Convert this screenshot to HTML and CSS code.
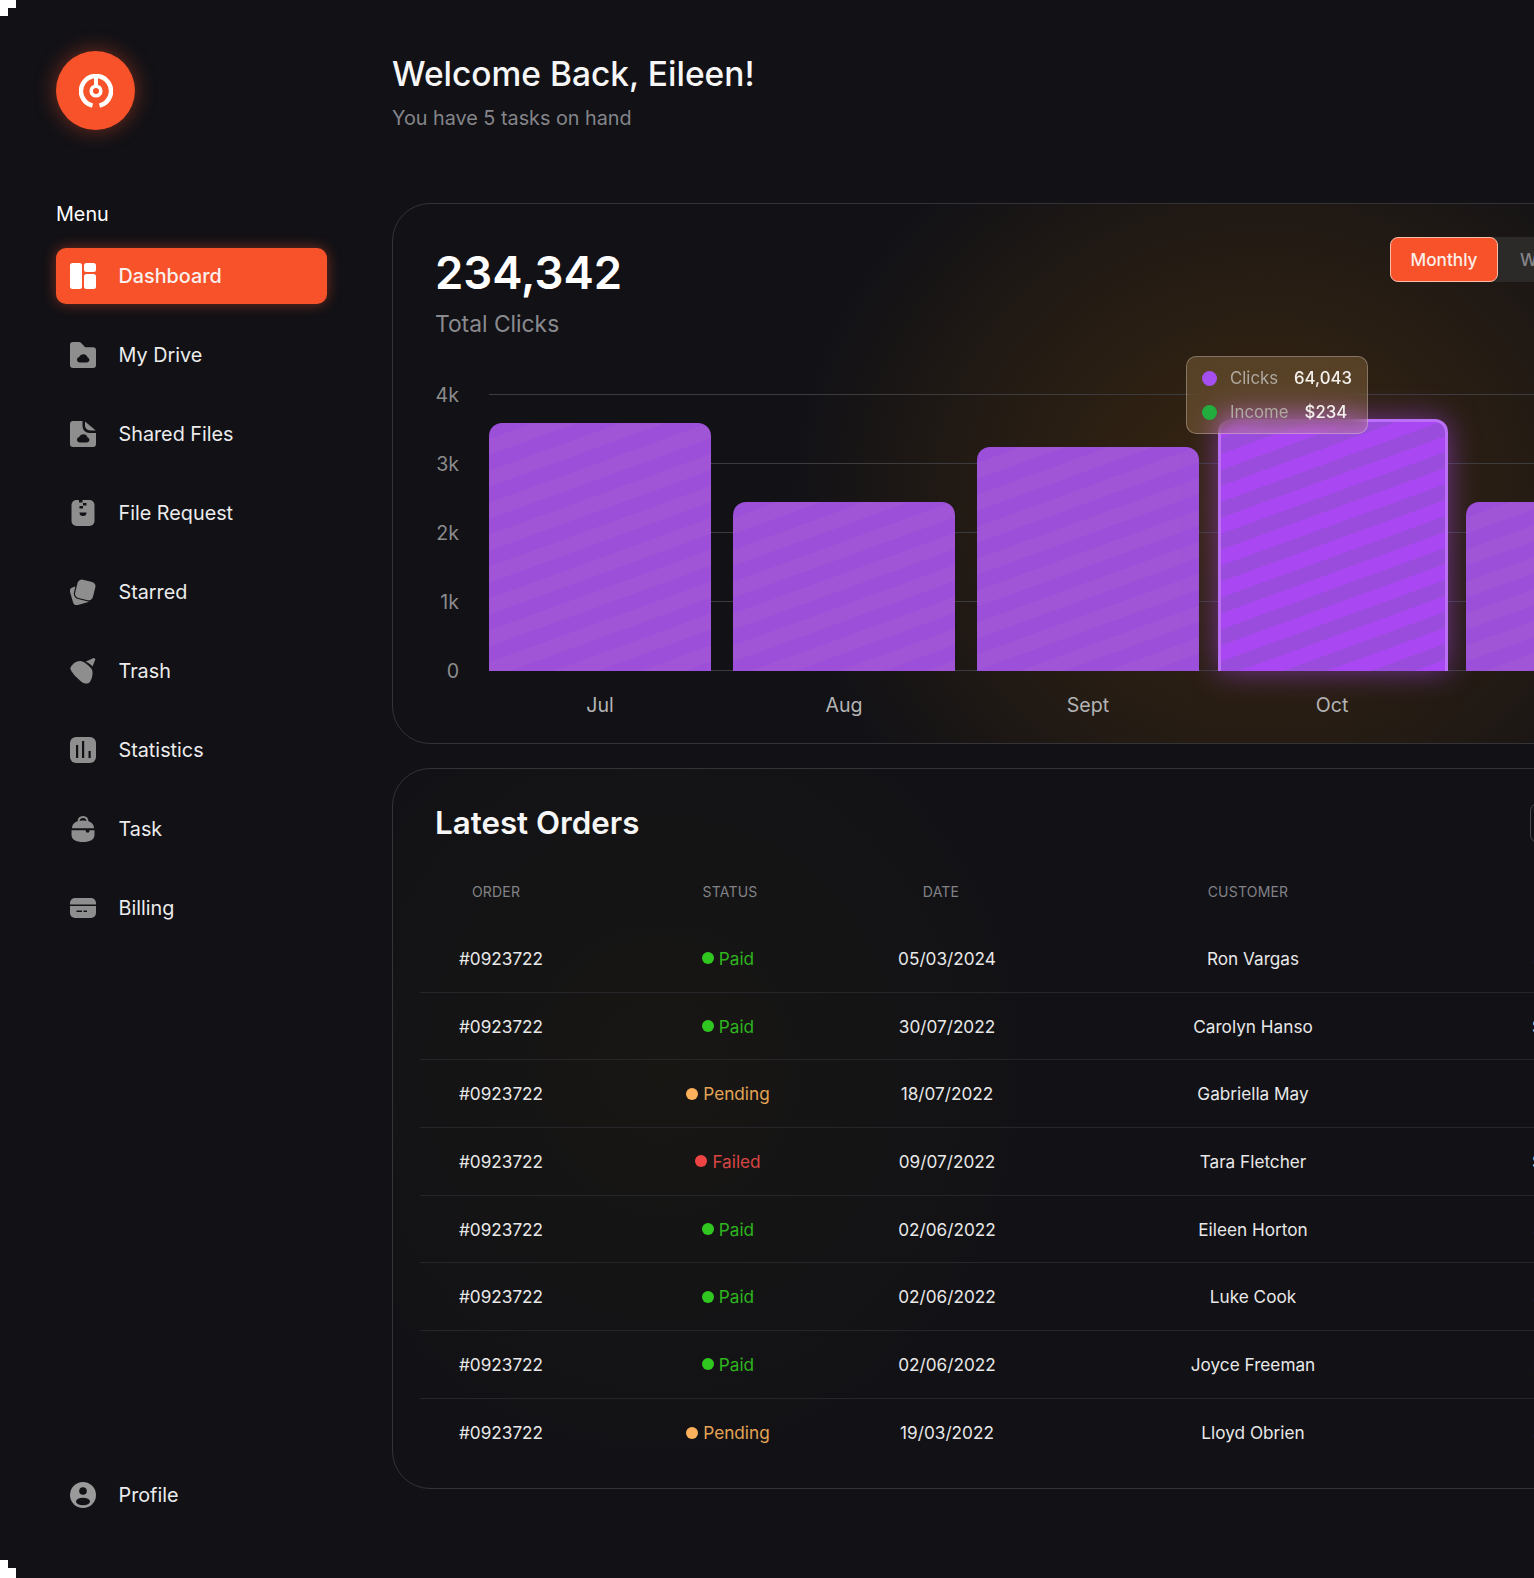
FILE: index.html
```html
<!DOCTYPE html>
<html lang="en">
<head>
<meta charset="utf-8">
<title>Dashboard</title>
<link rel="stylesheet" href="styles.css">
</head>
<body>
<span class="corner corner-top"></span>
<span class="corner corner-bottom"></span>
<div class="app">
	<aside class="sidebar">
		<div class="logo">
			<svg viewBox="0 0 34 34" width="34" height="34" fill="none" stroke="#fff"><path d="M13.5 31.6A15 15 0 1 1 20.500 31.600" stroke-width="4.500"/><path d="M17 2v9" stroke-width="4"/><circle cx="17" cy="17" r="4.800" stroke-width="3.600"/></svg>
		</div>
		<p class="menu-label">Menu</p>
		<nav class="nav">
			<a class="nav-item active"><svg class="icon" viewBox="0 0 26 26"><rect width="12" height="26" rx="2.500"/><rect x="14" width="12" height="9" rx="2.500"/><rect x="14" y="11" width="12" height="15" rx="2.500"/></svg>Dashboard</a>
			<a class="nav-item"><svg class="icon" viewBox="0 0 26 26"><path d="M3 0h6a3 3 0 0 1 2.200 1l4 4.200H23a3 3 0 0 1 3 3V23a3 3 0 0 1-3 3H3a3 3 0 0 1-3-3V3a3 3 0 0 1 3-3z"/><path class="cut" d="M9.500 20.500h7.500a2.500 2.500 0 0 0 .6-4.900 4.500 4.500 0 0 0-8.500-.6 2.800 2.800 0 0 0 .4 5.500z"/></svg>My Drive</a>
			<a class="nav-item"><svg class="icon" viewBox="0 0 26 26"><path d="M3 0h9.500v5a7 7 0 0 0 7 7H26v11a3 3 0 0 1-3 3H3a3 3 0 0 1-3-3V3a3 3 0 0 1 3-3z"/><path d="M15 .6 25.800 9.500H20a5 5 0 0 1-5-5z"/><path class="cut" d="M9.500 21.500h7.500a2.500 2.500 0 0 0 .6-4.900 4.500 4.500 0 0 0-8.500-.6 2.800 2.800 0 0 0 .4 5.500z"/></svg>Shared Files</a>
			<a class="nav-item"><svg class="icon" viewBox="0 0 26 26"><rect x="1.500" width="23" height="26" rx="5"/><path class="cut" d="M9 0h3.500v2.500H9zM13 3h3.500v2.500H13zM9.500 6H13v2.500H9.500zM9.500 12.500h7a3.500 3.500 0 0 1-7 0z"/></svg>File Request</a>
			<a class="nav-item"><svg class="icon" viewBox="0 0 26 26"><rect x="1" y="6.500" width="18" height="18.500" rx="4" transform="rotate(-16 10 15)"/><rect x="5.500" y="1" width="19.500" height="20" rx="5" transform="rotate(14 15.500 11)" class="front"/></svg>Starred</a>
			<a class="nav-item"><svg class="icon" viewBox="0 0 26 26"><path d="M.6 9.400C2.500 5.500 7 2.600 10.500 3c2.800.4 8 3.800 11.200 8 2 3.500.2 10.800-2 13.200-1.500 1.900-5.200 1.700-7.200.2C8.300 21.400 2.400 15.700.6 11.500c-.4-.9-.4-1.500 0-2.100z"/><path d="M15.500 3.800 23.500 0l2 1-3 7.500c-1.600-1.900-4.300-3.800-7-4.700z"/></svg>Trash</a>
			<a class="nav-item"><svg class="icon" viewBox="0 0 26 26"><rect width="26" height="26" rx="6"/><path class="cut" d="M6 8h2.200v13H6zM12 4h2.200v17H12zM18.500 14h2.200v7h-2.200z"/></svg>Statistics</a>
			<a class="nav-item"><svg class="icon" viewBox="0 0 26 26"><path class="handle" d="M8.500 6C8.500 2.500 10 1 13 1s4.500 1.500 4.500 5" fill="none"/><path d="M2 12C2 7.500 6 4.500 13 4.500S24 7.500 24 12v.3H2z"/><path d="M1.500 14.200h14.300v1.300a1 1 0 0 0 1 1h1.600a1 1 0 0 0 1-1v-1.300h5.100V19c0 4.500-4.500 7-11.500 7S1.500 23.500 1.500 19z"/></svg>Task</a>
			<a class="nav-item"><svg class="icon" viewBox="0 0 26 26"><rect y="3" width="26" height="20" rx="5"/><path class="cut" d="M0 9.500h26v1.400H0zM6.500 15.500h5.500v1.600H6.500zM13.500 15.500H17v1.600h-3.500z"/></svg>Billing</a>
		</nav>
		<a class="nav-item profile"><svg class="icon" viewBox="0 0 26 26"><circle cx="13" cy="13" r="13"/><circle class="cut" cx="13" cy="9" r="3.800"/><ellipse class="cut" cx="13" cy="19.500" rx="7" ry="3.800"/></svg>Profile</a>
	</aside>

	<main class="main">
		<h1 class="title">Welcome Back, Eileen!</h1>
		<p class="subtitle">You have 5 tasks on hand</p>

		<section class="card chart-card">
			<div class="chart-head">
				<div class="totals">
					<div class="total-num">234,342</div>
					<div class="total-label">Total Clicks</div>
				</div>
				<div class="toggle">
					<span class="toggle-btn on">Monthly</span>
					<span class="toggle-btn">Weekly</span>
					<span class="toggle-btn">Daily</span>
				</div>
			</div>
			<div class="chart">
				<div class="y-axis">
					<span>4k</span><span>3k</span><span>2k</span><span>1k</span><span>0</span>
				</div>
				<div class="plot">
					<div class="grid-lines"><i></i><i></i><i></i><i></i><i></i></div>
					<div class="bars">
						<div class="bar" style="height:248px"></div>
						<div class="bar" style="height:169px"></div>
						<div class="bar" style="height:224px"></div>
						<div class="bar bar-hot" style="height:252px"></div>
						<div class="bar" style="height:169px"></div>
						<div class="bar" style="height:200px"></div>
					</div>
					<div class="tooltip">
						<div class="tip-row"><span class="tip-dot purple"></span><span class="tip-label">Clicks</span><span class="tip-val">64,043</span></div>
						<div class="tip-row"><span class="tip-dot green"></span><span class="tip-label">Income</span><span class="tip-val">$234</span></div>
					</div>
				</div>
			</div>
			<div class="x-axis"><span>Jul</span><span>Aug</span><span>Sept</span><span>Oct</span><span>Nov</span><span>Dec</span></div>
		</section>

		<section class="card orders-card">
			<div class="orders-head">
				<h2 class="orders-title">Latest Orders</h2>
				<span class="orders-btn"></span>
			</div>
			<div class="table">
				<div class="row row-head"><span>Order</span><span>Status</span><span>Date</span><span>Customer</span></div>
				<div class="row"><span>#0923722</span><span class="status paid">Paid</span><span>05/03/2024</span><span>Ron Vargas</span><span class="amount dim">$168</span></div>
				<div class="row"><span>#0923722</span><span class="status paid">Paid</span><span>30/07/2022</span><span>Carolyn Hanso</span><span class="amount edge">$779</span></div>
				<div class="row"><span>#0923722</span><span class="status pending">Pending</span><span>18/07/2022</span><span>Gabriella May</span><span class="amount"></span></div>
				<div class="row"><span>#0923722</span><span class="status failed">Failed</span><span>09/07/2022</span><span>Tara Fletcher</span><span class="amount edge">$389</span></div>
				<div class="row"><span>#0923722</span><span class="status paid">Paid</span><span>02/06/2022</span><span>Eileen Horton</span><span class="amount dim">$598</span></div>
				<div class="row"><span>#0923722</span><span class="status paid">Paid</span><span>02/06/2022</span><span>Luke Cook</span><span class="amount dim">$545</span></div>
				<div class="row"><span>#0923722</span><span class="status paid">Paid</span><span>02/06/2022</span><span>Joyce Freeman</span><span class="amount dim">$875</span></div>
				<div class="row"><span>#0923722</span><span class="status pending">Pending</span><span>19/03/2022</span><span>Lloyd Obrien</span><span class="amount dim">$238</span></div>
			</div>
		</section>
	</main>
</div>
</body>
</html>
```

FILE: styles.css
```css
* { box-sizing: border-box }
html, body { margin: 0; height: 100%; background: #111116 }
body { font-family: Inter, "Liberation Sans", sans-serif; color: #f2f2f2; overflow: hidden }

.corner { position: absolute; left: 0; background: #fff; width: 16px; z-index: 5 }
.corner-top { top: 0; height: 16px; clip-path: polygon(0 0, 100% 0, 100% 8px, 8px 8px, 8px 100%, 0 100%) }
.corner-bottom { bottom: 0; height: 18px; clip-path: polygon(0 0, 8px 0, 8px 8px, 100% 8px, 100% 100%, 0 100%) }

.app { display: flex; height: 1578px; overflow: hidden }

/* sidebar */
.sidebar { flex: none; width: 392px; padding: 51px 0 55px 56px; display: flex; flex-direction: column }
.logo { width: 79px; height: 79px; border-radius: 50%; background: #f8522a; box-shadow: 0 0 22px rgba(248, 82, 42, .45); display: flex; align-items: center; justify-content: center }
.menu-label { margin: 72px 0 22px; font-size: 19.800px; line-height: 24px; color: #fff }
.nav { display: flex; flex-direction: column; gap: 23px }
.nav-item { display: flex; align-items: center; gap: 22.500px; width: 271px; height: 56px; padding-left: 14px; border-radius: 10px; font-size: 19.800px; color: #ececec }
.nav-item.active { background: #f8522a; color: #f8f0ee; font-weight: 500; box-shadow: 0 0 14px rgba(248, 82, 42, .45) }
.icon { flex: none; width: 26px; height: 26px; fill: #8e8e8e }
.icon .cut { fill: #111116 }
.icon .front { stroke: #111116; stroke-width: 1.200 }
.icon .handle { stroke: #8e8e8e; stroke-width: 2 }
.active .icon { fill: #fff }
.profile { margin-top: auto }
.profile .icon { fill: #9a9a9a }

/* main */
.main { flex: none; width: 1500px; padding-top: 53px }
.title { margin: 0; font-size: 33.500px; line-height: 42px; font-weight: 500; color: #f6f6f6 }
.subtitle { margin: 10px 0 0; font-size: 19.800px; line-height: 26px; color: #85858a }
.card { border: 1px solid #333338; border-radius: 38px }

.chart-card { margin-top: 72px; height: 541px; padding: 33px 0 0 42px; background: radial-gradient(ellipse 480px 440px at 870px 300px, rgba(130, 78, 8, .36), rgba(125, 75, 8, .16) 62%, transparent) }
.chart-head { display: grid; grid-template-columns: 955px auto; justify-content: start; align-items: start }
.totals { padding-top: 9px }
.total-num { font-size: 45.500px; line-height: 54px; font-weight: 600; color: #fff }
.total-label { margin-top: 10px; font-size: 22.800px; line-height: 28px; color: #8a8a8e }
.toggle { display: flex; background: #2c2a28; border-radius: 8px; width: max-content }
.toggle-btn { height: 45px; padding: 0 22px; display: flex; align-items: center; font-size: 17.200px; font-weight: 500; color: #85858a; border-radius: 8px }
.toggle-btn.on { width: 108px; padding: 0; justify-content: center; background: #f8522a; border: 1px solid #f6bda9; color: #fbeee9 }

.chart { display: flex; margin-top: 56px }
.y-axis { flex: none; width: 54px; height: 277px; padding-right: 30px; display: flex; flex-direction: column; justify-content: space-between; align-items: flex-end; font-size: 19.600px; color: #8c8c8c }
.y-axis span { height: 1px; display: flex; align-items: center }
.plot { position: relative; flex: 1; height: 277px }
.grid-lines { position: absolute; inset: 0; display: flex; flex-direction: column; justify-content: space-between }
.grid-lines i { height: 1px; background: #3c3c3e }
.bars { position: relative; height: 100%; display: flex; align-items: flex-end; gap: 22px }
.bar { flex: none; width: 222px; border-radius: 13px 13px 0 0; background: repeating-linear-gradient(160deg, #9c50da 0 15px, #a055d7 15px 30px) }
.bar-hot { width: 230px; margin: 0 -4px 0 -3px; border: 3px solid #bb6ff6; border-bottom: 0; background: repeating-linear-gradient(160deg, #a947f3 0 15px, #9a4cdc 15px 30px); box-shadow: 0 0 30px rgba(170, 70, 245, .55) }

.tooltip { position: absolute; left: 697px; top: -38px; width: 182px; height: 78px; padding: 5px 0 5px 15px; display: flex; flex-direction: column; justify-content: center; gap: 10px; border: 1px solid rgba(255, 255, 255, .28); border-radius: 10px; background: rgba(255, 200, 120, .2); backdrop-filter: blur(12px); font-size: 16.800px }
.tip-row { display: flex; align-items: center; line-height: 24px }
.tip-dot { width: 15px; height: 15px; border-radius: 50%; margin-right: 13px }
.tip-dot.purple { background: #a64ff0 }
.tip-dot.green { background: #22ad3e }
.tip-label { color: #b0aaa0; margin-right: 16px }
.tip-val { color: #f4f0ec; font-weight: 500 }

.x-axis { display: flex; gap: 22px; margin: 22px 0 0 54px; font-size: 19.600px; line-height: 24px; color: #b4b4b4 }
.x-axis span { flex: none; width: 222px; text-align: center }

/* orders */
.orders-card { margin-top: 24px; height: 721px; padding: 34px 0 0 27px; background: radial-gradient(ellipse 430px 460px at 270px 300px, rgba(70, 60, 5, .13), transparent) }
.orders-head { display: grid; grid-template-columns: 1095px 100px; align-items: center; height: 40px; padding-left: 15px }
.orders-title { margin: 0; font-size: 31.300px; line-height: 38px; font-weight: 600; color: #f6f6f6 }
.orders-btn { height: 40px; border: 1px solid #4a4a4e; border-radius: 8px }
.table { margin-top: 14px }
.row { display: grid; grid-template-columns: 162px 292px 146px 466px 1fr; align-items: center; height: 67.700px; text-align: center; font-size: 17.200px; color: #e8e8e8; border-bottom: 1px solid #25252a }
.row:last-child { border-bottom: 0 }
.row-head { height: 68px; border-bottom: 0; font-size: 14px; text-transform: uppercase; color: #828286; letter-spacing: .2px }
.row-head span:nth-child(1) { padding-right: 10px }
.row-head span:nth-child(2) { padding-left: 4px }
.row-head span:nth-child(3) { padding-right: 12px }
.row-head span:nth-child(4) { padding-right: 10px }

.status { display: flex; align-items: center; justify-content: center; gap: 5px }
.status::before { content: ""; width: 12px; height: 12px; border-radius: 50%; background: currentColor }
.paid { color: #2fb41f }
.paid::before { background: #30c820 }
.pending { color: #e3a354 }
.pending::before { background: #fdb15c }
.failed { color: #d84545 }
.failed::before { background: #ef4444 }
.amount { text-align: left; padding-left: 47px }
.amount.edge { padding-left: 46px }
.amount.dim { color: #6d6d70 }
```
